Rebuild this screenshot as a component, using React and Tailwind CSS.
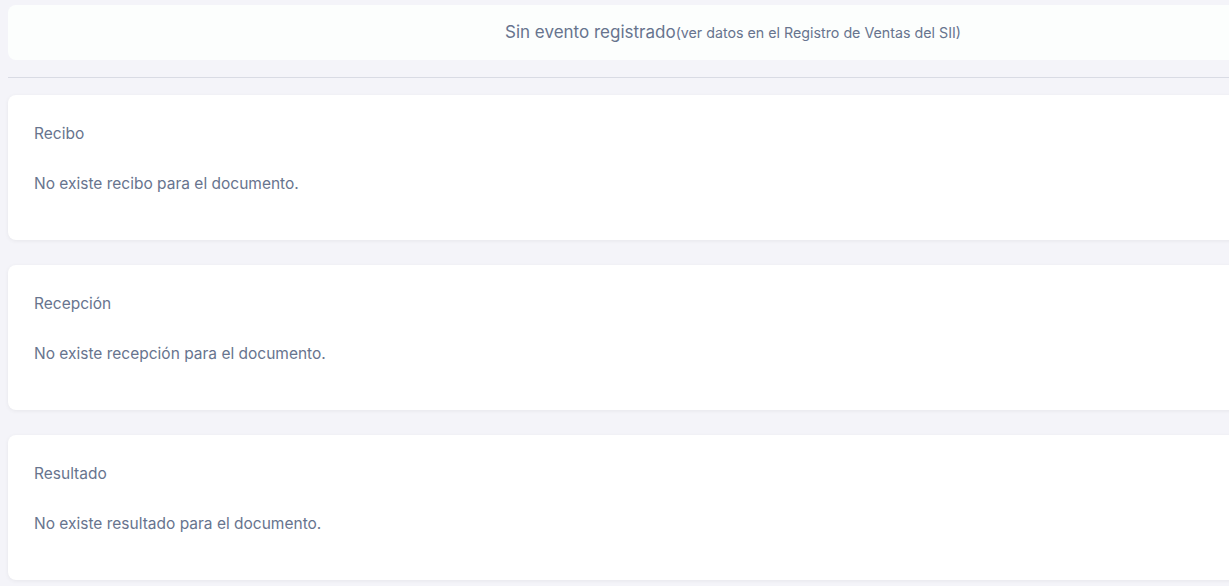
export default function App() {
  const sections = [
    { title: 'Recibo', body: 'No existe recibo para el documento.' },
    { title: 'Recepción', body: 'No existe recepción para el documento.' },
    { title: 'Resultado', body: 'No existe resultado para el documento.' },
  ];

  return (
    <div className="w-[1229px] h-[586px] overflow-hidden bg-[#f4f4f9] text-[#67748e] font-['Inter','Noto_Sans',sans-serif]">
      <div className="w-[1450px] ml-2 pt-[5px]">
        {/* Event status */}
        <div className="h-[55px] flex items-center justify-center rounded-lg bg-[#fcfefd]">
          <span className="text-[17px]">Sin evento registrado</span>
          <span className="text-[14.25px]">(ver datos en el Registro de Ventas del SII)</span>
        </div>

        <div className="mt-[17px] border-t border-[#d9dbe4]" />

        <div className="mt-[17px] flex flex-col gap-[25px]">
          {sections.map(s => (
            <div key={s.title} className="h-[145px] rounded-lg bg-white px-[26px] pt-[27.5px] shadow-[0_1px_4px_rgba(0,0,0,0.06)]">
              <p className="text-[15.5px] leading-[22px]">{s.title}</p>
              <p className="mt-[28.5px] text-[15.5px] leading-[22px]">{s.body}</p>
            </div>
          ))}
        </div>
      </div>
    </div>
  );
}
